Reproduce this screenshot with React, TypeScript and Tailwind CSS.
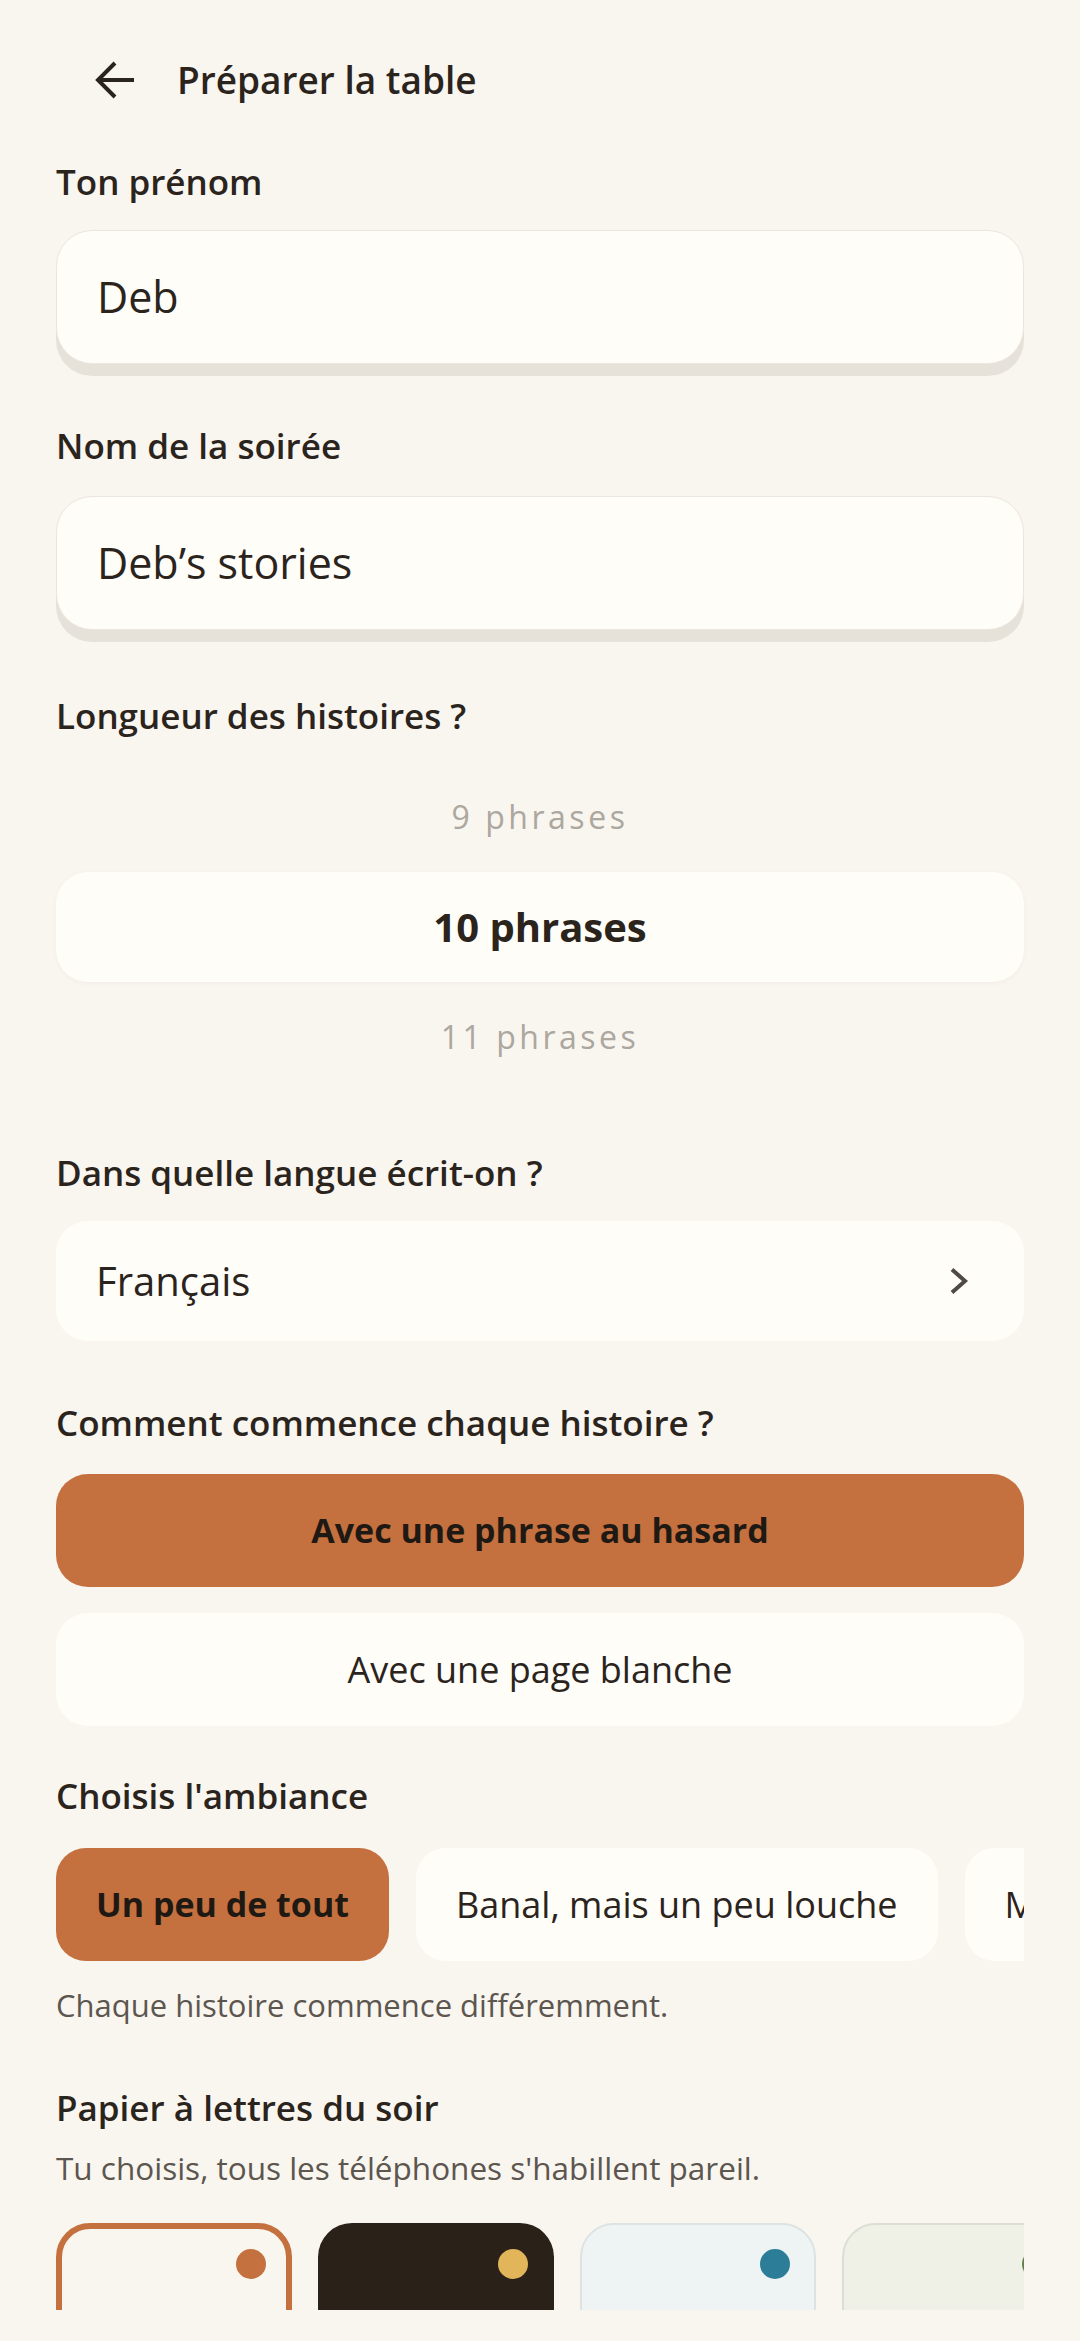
import type { ReactNode } from 'react'

function Label({ children, className = '' }: { children: ReactNode; className?: string }) {
  return (
    <p className={`text-[35px] leading-[44px] font-semibold text-[#2b241d] ${className}`}>
      {children}
    </p>
  )
}

const PAPERS = [
  { id: 'creme', card: 'bg-[#f9f5ef] border-[6px] border-[#c5703f] p-[20px]', dot: 'bg-[#c5703f]' },
  { id: 'nuit', card: 'bg-[#2a2119] p-[26px]', dot: 'bg-[#e2b55a]' },
  { id: 'ciel', card: 'bg-[#eef4f3] border-2 border-[#dde3e2] p-[24px]', dot: 'bg-[#2c7e98]' },
  { id: 'sauge', card: 'bg-[#eff1e7] border-2 border-[#dcddd3] p-[24px]', dot: 'bg-[#5f7f4b]' },
]

export default function App() {
  return (
    <div className="h-[2341px] w-full flex flex-col bg-[#f9f5ef] font-['Open_Sans',sans-serif] text-[#2b241d]">
      <div className="h-[2310px] overflow-hidden">
        {/* header */}
        <div className="h-[160px] flex items-center pl-[94px] gap-[43px]">
          <svg width="40" height="40" viewBox="0 0 40 40" className="shrink-0">
            <path d="M40 20H4M21 3L4 20l17 17" fill="none" stroke="#2b241d" strokeWidth="4" />
          </svg>
          <h1 className="text-[37px] leading-[48px] font-semibold">Préparer la table</h1>
        </div>

        <div className="px-[56px] flex flex-col">
          <Label>Ton prénom</Label>
          <div className="mt-[26px] h-[134px] rounded-[36px] border-[1.5px] border-[#ebe6dd] bg-[#fffdf8] shadow-[0_12px_0_#e7e2d9] flex items-center px-[40px] text-[43px]">
            Deb
          </div>

          <Label className="mt-[60px]">Nom de la soirée</Label>
          <div className="mt-[28px] h-[134px] rounded-[36px] border-[1.5px] border-[#ebe6dd] bg-[#fffdf8] shadow-[0_12px_0_#e7e2d9] flex items-center px-[40px] text-[43px]">
            Deb’s stories
          </div>

          <Label className="mt-[64px]">Longueur des histoires ?</Label>
          <div className="mt-[24px] flex flex-col">
            <div className="h-[110px] flex items-center justify-center text-[32px] font-medium tracking-[0.11em] text-[#aca79f]">
              9 phrases
            </div>
            <div className="h-[110px] rounded-[32px] bg-[#fffdf8] shadow-[0_1px_4px_rgba(120,100,70,0.05)] flex items-center justify-center text-[40px] font-bold">
              10 phrases
            </div>
            <div className="h-[110px] flex items-center justify-center text-[32px] font-medium tracking-[0.11em] text-[#aca79f]">
              11 phrases
            </div>
          </div>

          <Label className="mt-[59px]">Dans quelle langue écrit-on ?</Label>
          <div className="mt-[26px] h-[120px] rounded-[32px] bg-[#fffdf8] flex items-center justify-between pl-[40px] pr-[55px]">
            <span className="text-[40px] font-medium">Français</span>
            <svg width="20" height="28" viewBox="0 0 20 28">
              <path d="M3 2.5L16 14 3 25.5" fill="none" stroke="#4f4a44" strokeWidth="4" />
            </svg>
          </div>

          <Label className="mt-[60px]">Comment commence chaque histoire ?</Label>
          <div className="mt-[29px] h-[113px] rounded-[32px] bg-[#c5703f] flex items-center justify-center text-[34px] font-bold text-[#1f1914]">
            Avec une phrase au hasard
          </div>
          <div className="mt-[26px] h-[113px] rounded-[32px] bg-[#fffdf8] flex items-center justify-center text-[36px]">
            Avec une page blanche
          </div>

          <Label className="mt-[48px]">Choisis l'ambiance</Label>
          <div className="mt-[30px] flex gap-[27px] overflow-hidden">
            <div className="h-[113px] shrink-0 rounded-[30px] bg-[#c5703f] px-[40px] flex items-center text-[34px] font-bold text-[#1f1914]">
              Un peu de tout
            </div>
            <div className="h-[113px] shrink-0 rounded-[30px] bg-[#fffdf8] px-[40px] flex items-center text-[36px]">
              Banal, mais un peu louche
            </div>
            <div className="h-[113px] shrink-0 rounded-[30px] bg-[#fffdf8] px-[40px] flex items-center text-[36px]">
              Mystère et frissons
            </div>
          </div>
          <p className="mt-[25px] text-[31px] leading-[38px] text-[#5c564f]">
            Chaque histoire commence différemment.
          </p>

          <Label className="mt-[62px]">Papier à lettres du soir</Label>
          <p className="mt-[19px] text-[31.5px] leading-[38px] text-[#5c564f]">
            Tu choisis, tous les téléphones s'habillent pareil.
          </p>
          <div className="mt-[36px] flex gap-[26px] overflow-hidden">
            {PAPERS.map(p => (
              <div key={p.id} className={`w-[236px] h-[300px] shrink-0 rounded-[34px] flex justify-end items-start ${p.card}`}>
                <span className={`w-[30px] h-[30px] rounded-full ${p.dot}`} />
              </div>
            ))}
          </div>
        </div>
      </div>
      <div className="h-[31px] bg-[#f9f5ef]" />
    </div>
  )
}
